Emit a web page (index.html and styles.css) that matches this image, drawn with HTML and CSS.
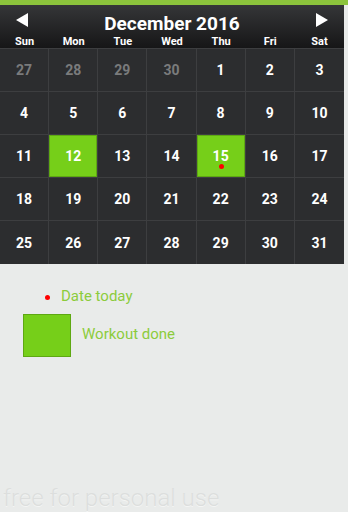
FILE: index.html
```html
<!DOCTYPE html>
<html lang="en">
<head>
    <meta charset="UTF-8">
    <meta name="viewport" content="width=device-width, initial-scale=1.0">
    <title>Workout Calendar</title>
    <link rel="stylesheet" href="styles.css">
</head>
<body>
    <div class="top-bar"></div>

    <div class="calendar">
        <div class="cal-head">
            <div class="month-row">
                <span class="arrow arrow-left"></span>
                <span class="month">December 2016</span>
                <span class="arrow arrow-right"></span>
            </div>
            <div class="weekdays">
                <span>Sun</span><span>Mon</span><span>Tue</span><span>Wed</span><span>Thu</span><span>Fri</span><span>Sat</span>
            </div>
        </div>

        <div class="grid">
            <div class="day other">27</div>
            <div class="day other">28</div>
            <div class="day other">29</div>
            <div class="day other">30</div>
            <div class="day">1</div>
            <div class="day">2</div>
            <div class="day">3</div>

            <div class="day">4</div>
            <div class="day">5</div>
            <div class="day">6</div>
            <div class="day">7</div>
            <div class="day">8</div>
            <div class="day">9</div>
            <div class="day">10</div>

            <div class="day">11</div>
            <div class="day done">12</div>
            <div class="day">13</div>
            <div class="day">14</div>
            <div class="day done today">15</div>
            <div class="day">16</div>
            <div class="day">17</div>

            <div class="day">18</div>
            <div class="day">19</div>
            <div class="day">20</div>
            <div class="day">21</div>
            <div class="day">22</div>
            <div class="day">23</div>
            <div class="day">24</div>

            <div class="day">25</div>
            <div class="day">26</div>
            <div class="day">27</div>
            <div class="day">28</div>
            <div class="day">29</div>
            <div class="day">30</div>
            <div class="day">31</div>
        </div>
    </div>

    <div class="legend">
        <div class="legend-row">
            <span class="dot"></span>
            <span class="legend-text">Date today</span>
        </div>
        <div class="legend-row legend-done">
            <span class="swatch"></span>
            <span class="legend-text">Workout done</span>
        </div>
    </div>

    <div class="watermark">free for personal use</div>
</body>
</html>
```

FILE: styles.css
```css
body {
    margin: 0;
    width: 348px;
    height: 512px;
    background-color: #e9ebea;
    font-family: Roboto, "Liberation Sans", sans-serif;
    display: flex;
    flex-direction: column;
    overflow: hidden;
}

.top-bar {
    height: 5px;
    background: #8cc43c;
}

.calendar {
    width: 344px;
    background: #2c2d2f;
}

.cal-head {
    height: 43px;
    background: linear-gradient(#353638, #161617);
    color: #fff;
    display: flex;
    flex-direction: column;
}

.month-row {
    height: 30px;
    display: flex;
    align-items: center;
    justify-content: space-between;
    padding: 0 16px 0 16px;
}

.month {
    font-size: 19px;
    font-weight: bold;
    padding-top: 6px;
}

.arrow {
    width: 0;
    height: 0;
    border-top: 7px solid transparent;
    border-bottom: 7px solid transparent;
}

.arrow-left {
    border-right: 12px solid #fff;
}

.arrow-right {
    border-left: 12px solid #fff;
}

.weekdays {
    display: grid;
    grid-template-columns: repeat(7, 1fr);
    font-size: 11px;
    font-weight: bold;
    text-align: center;
    line-height: 13px;
}

.grid {
    display: grid;
    grid-template-columns: repeat(7, 1fr);
    grid-auto-rows: 43px;
    border-top: 1px solid #3d3e40;
}

.day {
    display: flex;
    align-items: center;
    justify-content: center;
    color: #fff;
    font-size: 14px;
    font-weight: bold;
    border-right: 1px solid #3d3e40;
    border-bottom: 1px solid #3d3e40;
    position: relative;
}

.day:nth-child(7n) {
    border-right: none;
}

.day:nth-last-child(-n+7) {
    border-bottom: none;
}

.day.other {
    color: #7a7b7c;
}

.day.done {
    background: #76cf19;
    box-shadow: inset 0 0 0 1px #5ea812;
}

.day.today::after {
    content: '';
    position: absolute;
    left: 50%;
    top: 29px;
    width: 5px;
    height: 5px;
    margin-left: -2px;
    border-radius: 50%;
    background: #f00;
}

.legend {
    padding: 23px 0 0 23px;
    display: flex;
    flex-direction: column;
    gap: 9px;
}

.legend-row {
    display: flex;
    align-items: center;
    color: #8ccb3c;
    font-size: 15px;
}

.dot {
    width: 5px;
    height: 5px;
    border-radius: 50%;
    background: #f00;
    margin: 2px 11px 0 22px;
}

.swatch {
    width: 46px;
    height: 41px;
    background: #76cf19;
    border: 1px solid #5ea812;
    margin-right: 11px;
}

.legend-done .legend-text {
    padding-bottom: 3px;
}

.watermark {
    margin-top: auto;
    padding: 0 0 0 3px;
    font-size: 24px;
    font-weight: 300;
    color: #dcdedd;
    text-shadow: 0 1px 0 #f4f5f4;
    line-height: 27px;
}
```
